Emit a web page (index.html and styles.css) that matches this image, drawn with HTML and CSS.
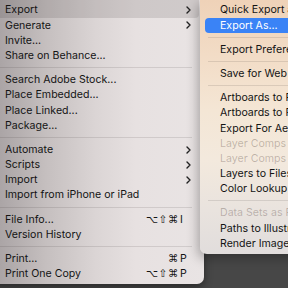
FILE: index.html
```html
<!DOCTYPE html>
<html>
<head>
<meta charset="utf-8">
<link rel="stylesheet" href="styles.css">
</head>
<body>
<div class="screen">
  <div class="menu main">
    <div class="item first hover"><span class="label">Export</span><span class="chev"><svg width="5" height="8" viewBox="0 0 5 8"><path d="M1 1 L4 4 L1 7" fill="none" stroke="#222" stroke-width="1.4" stroke-linecap="round" stroke-linejoin="round"/></svg></span></div>
    <div class="item"><span class="label">Generate</span><span class="chev"><svg width="5" height="8" viewBox="0 0 5 8"><path d="M1 1 L4 4 L1 7" fill="none" stroke="#222" stroke-width="1.4" stroke-linecap="round" stroke-linejoin="round"/></svg></span></div>
    <div class="item"><span class="label">Invite...</span></div>
    <div class="item"><span class="label">Share on Behance...</span></div>
    <div class="sep"></div>
    <div class="item"><span class="label">Search Adobe Stock...</span></div>
    <div class="item"><span class="label">Place Embedded...</span></div>
    <div class="item"><span class="label">Place Linked...</span></div>
    <div class="item"><span class="label">Package...</span></div>
    <div class="sep"></div>
    <div class="item"><span class="label">Automate</span><span class="chev"><svg width="5" height="8" viewBox="0 0 5 8"><path d="M1 1 L4 4 L1 7" fill="none" stroke="#222" stroke-width="1.4" stroke-linecap="round" stroke-linejoin="round"/></svg></span></div>
    <div class="item"><span class="label">Scripts</span><span class="chev"><svg width="5" height="8" viewBox="0 0 5 8"><path d="M1 1 L4 4 L1 7" fill="none" stroke="#222" stroke-width="1.4" stroke-linecap="round" stroke-linejoin="round"/></svg></span></div>
    <div class="item"><span class="label">Import</span><span class="chev"><svg width="5" height="8" viewBox="0 0 5 8"><path d="M1 1 L4 4 L1 7" fill="none" stroke="#222" stroke-width="1.4" stroke-linecap="round" stroke-linejoin="round"/></svg></span></div>
    <div class="item"><span class="label">Import from iPhone or iPad</span></div>
    <div class="sep"></div>
    <div class="item"><span class="label">File Info...</span><span class="mods">⌥⇧⌘</span><span class="key">I</span></div>
    <div class="item"><span class="label">Version History</span></div>
    <div class="sep"></div>
    <div class="item"><span class="label">Print...</span><span class="mods">⌘</span><span class="key">P</span></div>
    <div class="item"><span class="label">Print One Copy</span><span class="mods">⌥⇧⌘</span><span class="key">P</span></div>
  </div>
  <div class="menu sub">
    <div class="item first"><span class="label">Quick Export as PNG</span></div>
    <div class="item selected"><span class="label">Export As...</span></div>
    <div class="sep"></div>
    <div class="item"><span class="label">Export Preferences...</span></div>
    <div class="sep"></div>
    <div class="item"><span class="label">Save for Web (Legacy)...</span></div>
    <div class="sep"></div>
    <div class="item"><span class="label">Artboards to Files...</span></div>
    <div class="item"><span class="label">Artboards to PDF...</span></div>
    <div class="item"><span class="label">Export For Aero...</span></div>
    <div class="item disabled"><span class="label">Layer Comps to Files...</span></div>
    <div class="item disabled"><span class="label">Layer Comps to PDF...</span></div>
    <div class="item"><span class="label">Layers to Files...</span></div>
    <div class="item"><span class="label">Color Lookup Tables...</span></div>
    <div class="sep"></div>
    <div class="item disabled"><span class="label">Data Sets as Files...</span></div>
    <div class="item"><span class="label">Paths to Illustrator...</span></div>
    <div class="item"><span class="label">Render Image...</span></div>
  </div>
</div>
</body>
</html>
```

FILE: styles.css
```css
html, body {
  margin: 0;
  padding: 0;
}
body {
  width: 288px;
  height: 288px;
  overflow: hidden;
  background: #474747;
  font-family: Inter, "Liberation Sans", sans-serif;
  font-size: 10.6px;
  color: #141414;
}
.screen {
  display: flex;
  align-items: flex-start;
  width: 288px;
  height: 288px;
  overflow: hidden;
}
.menu {
  display: flex;
  flex-direction: column;
  flex: none;
}
.main {
  width: 218px;
  margin-left: -14px;
  padding-bottom: 3px;
  border-radius: 0 0 7px 7px;
  background: linear-gradient(90deg, #a39d9e 0px, #aea8a9 20px, #c5bfbf 60px, #dbd5d5 110px, #e7e1e1 150px, #e9e4e4 218px);
  box-shadow: 0 3px 8px rgba(0, 0, 0, 0.45);
  position: relative;
  z-index: 1;
}
.sub {
  width: 130px;
  margin-left: -4px;
  padding-bottom: 3px;
  border-radius: 0 0 7px 7px;
  background: linear-gradient(180deg, #efd2b8 0px, #f2dcc6 55px, #f4e6d5 110px, #f3e9dd 160px, #e9e3de 210px, #e1dddc 254px);
  box-shadow: -2px 4px 12px rgba(0, 0, 0, 0.3);
  position: relative;
  z-index: 2;
}
.item {
  display: flex;
  align-items: center;
  height: 15.2px;
  line-height: 15.2px;
  margin: 0 5px;
  border-radius: 4px;
  white-space: nowrap;
}
.main .item {
  padding: 0 8px 0 14px;
}
.sub .item {
  padding: 0 8px 0 15px;
}
.item.first {
  height: 17.6px;
  padding-top: 2.4px;
  box-sizing: border-box;
  border-radius: 0 0 4px 4px;
}
.label {
  flex: 1;
}
.hover {
  background: rgba(60, 50, 50, 0.14);
}
.selected {
  background: #3a83f6;
  color: #ffffff;
}
.disabled {
  color: rgba(60, 40, 30, 0.28);
}
.chev {
  display: flex;
  align-items: center;
  width: 5px;
  height: 8px;
}
.mods {
  font-family: "DejaVu Sans", sans-serif;
  font-size: 10.5px;
  letter-spacing: 0.6px;
}
.key {
  width: 11px;
  margin-left: 1px;
}
.sep {
  height: 1px;
  margin: 4px 12px 4px 12px;
  background: rgba(40, 30, 30, 0.12);
}
.sub .sep {
  margin: 4px 10px 4px 8px;
}
```
